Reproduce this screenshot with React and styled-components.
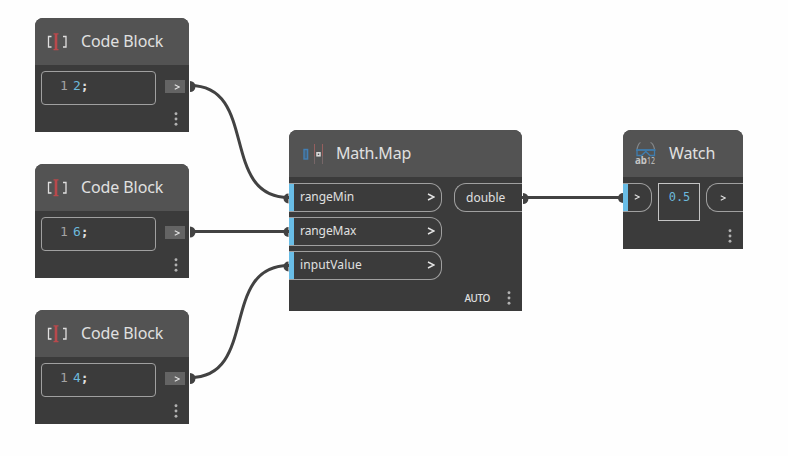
import React from "react";
import styled, { createGlobalStyle } from "styled-components";

const GlobalStyle = createGlobalStyle`
  * { box-sizing: border-box; }
  body { margin: 0; background: #fefefe; overflow: hidden; }
`;

const Canvas = styled.main`
  position: relative;
  width: 788px;
  height: 456px;
  background: #fefefe;
  font-family: "Noto Sans", sans-serif;
  color: #e0e0e0;
`;

const Wires = styled.svg`
  position: absolute;
  inset: 0;
`;

const Node = styled.section`
  position: absolute;
  left: ${(p) => p.$x}px;
  top: ${(p) => p.$y}px;
  width: ${(p) => p.$w}px;
  height: ${(p) => p.$h}px;
  display: flex;
  flex-direction: column;
  background: #3b3b3b;
  border-radius: 8px 8px 0 0;
`;

const Header = styled.header`
  display: flex;
  align-items: center;
  height: 47px;
  flex: none;
  padding-left: 11px;
  gap: 11px;
  background: #535353;
  border-radius: 8px 8px 0 0;
`;

const Title = styled.h2`
  margin: 0;
  padding-bottom: 2px;
  font-size: 16px;
  line-height: 22px;
  font-weight: 400;
  letter-spacing: ${(p) => p.$track || 0}px;
  white-space: nowrap;
`;

const CodeRow = styled.div`
  display: flex;
  justify-content: space-between;
  padding: 6px 4px 0 6px;
`;

const Editor = styled.div`
  display: flex;
  width: 115px;
  height: 34px;
  padding: 6px 0 0 18px;
  border: 1px solid #a0a0a0;
  border-radius: 4px;
  font: 13px/15px "DejaVu Sans Mono", monospace;
`;

const LineNumber = styled.span`
  width: 13px;
  color: #a3a3a3;
`;

const Value = styled.span`
  color: #6cb9dc;
`;

const Terminator = styled.span`
  font-weight: 700;
`;

const OutputTab = styled.div`
  display: flex;
  align-items: center;
  justify-content: flex-end;
  width: 20px;
  height: 13px;
  margin-top: 9px;
  padding-right: 5px;
  background: #646464;
`;

const Footer = styled.footer`
  display: flex;
  align-items: center;
  justify-content: flex-end;
  margin-top: auto;
  gap: ${(p) => p.$gap || 0}px;
  padding: 0 11px ${(p) => p.$bottom}px 0;
`;

const Lacing = styled.span`
  font-size: 10px;
  line-height: 14px;
  font-weight: 500;
  letter-spacing: -0.4px;
`;

const Ports = styled.div`
  display: flex;
  justify-content: space-between;
  align-items: flex-start;
  padding-top: 6px;
`;

const PortColumn = styled.div`
  display: flex;
  flex-direction: column;
  gap: 5px;
`;

const InPort = styled.div`
  display: flex;
  align-items: center;
  justify-content: space-between;
  width: ${(p) => p.$w}px;
  height: 29px;
  padding: 0 6px 2px 11px;
  border: 1px solid #a0a0a0;
  border-left: 0;
  border-radius: 0 12px 12px 0;
  box-shadow: inset 5px 0 #69bde6;
  font-size: 12px;
  letter-spacing: ${(p) => p.$track || 0}px;
`;

const OutPort = styled.div`
  display: flex;
  align-items: center;
  width: ${(p) => p.$w}px;
  height: 29px;
  padding-left: ${(p) => p.$pad}px;
  border: 1px solid #a0a0a0;
  border-right: 0;
  border-radius: 12px 0 0 12px;
  font-size: 12px;
`;

const Preview = styled.div`
  width: 42px;
  height: 38px;
  padding: 6px 0 0 1px;
  border: 1px solid #c4c4c4;
  color: #6cb9dc;
  text-align: center;
  font: 12px/15px "DejaVu Sans Mono", monospace;
`;

const Chevron = ({ small }) => (
  <svg width={small ? 6 : 8} height={small ? 6 : 8} viewBox="0 0 8 8">
    <path d="M1 1 7 4 1 7" fill="none" stroke="#e4e4e4" strokeWidth="1.4" />
  </svg>
);

const MenuDots = () => (
  <svg width="4" height="14" viewBox="0 0 4 14">
    {[1.7, 7, 12.3].map((y) => (
      <circle key={y} cx="2" cy={y} r="1.45" fill="#b2b2b2" />
    ))}
  </svg>
);

const CodeIcon = () => (
  <svg width="24" height="24" viewBox="0 0 24 24" fill="none">
    <path d="M5.5 6.5H2.5V17H5.5M17 6.5H20V17H17" stroke="#e0dfdf" strokeWidth="1.3" />
    <path d="M7.5 3.8H12.5M7.5 19.7H12.5" stroke="#b9494c" strokeWidth="1.2" />
    <path d="M10 4V20" stroke="#b9494c" strokeWidth="2.6" />
  </svg>
);

const MapIcon = () => (
  <svg width="25" height="24" viewBox="0 0 25 24" fill="none">
    <rect x="4" y="7.5" width="3.6" height="9.5" fill="#47647e" stroke="#427fb5" strokeWidth="1.4" />
    <path d="M14.5 2V14M22.5 2V14" stroke="#965f5e" />
    <path d="M14.5 14V22M22.5 14V22" stroke="#776768" />
    <rect x="17" y="10.8" width="3" height="3" stroke="#e0e0e0" strokeWidth="1.5" />
  </svg>
);

const IconText = styled.text`
  font: ${(p) => (p.$bold ? "700 10px" : "400 9px")} "Noto Sans", sans-serif;
  fill: #c4c4c4;
`;

const WatchIcon = () => (
  <svg width="24" height="26" viewBox="0 0 24 26" fill="none">
    <path d="M6.5 1.5Q4.5 2 3 8M16.5 1.5Q19 2 20.5 8" stroke="#85898c" strokeWidth="1.2" />
    <path d="M2 9H21.5" stroke="#3f7daf" strokeWidth="1.8" />
    <path d="M3 9V14.5H7.5L11.8 10.5 16 14.5H20.5V9" stroke="#3f7daf" strokeWidth="1.3" />
    <IconText $bold x="1" y="23" textLength="12" lengthAdjust="spacingAndGlyphs">ab</IconText>
    <IconText x="13" y="23" textLength="8" lengthAdjust="spacingAndGlyphs">12</IconText>
  </svg>
);

const blocks = [
  { y: 18, value: "2" },
  { y: 164, value: "6" },
  { y: 310, value: "4" },
];

const inputs = [
  { name: "rangeMin", track: -0.04 },
  { name: "rangeMax", track: -0.08 },
  { name: "inputValue", track: 0.12 },
];

function CodeBlock({ y, value }) {
  return (
    <Node $x={35} $y={y} $w={154} $h={114}>
      <Header>
        <CodeIcon />
        <Title $track={-0.1}>Code Block</Title>
      </Header>
      <CodeRow>
        <Editor>
          <LineNumber>1</LineNumber>
          <Value>{value}</Value>
          <Terminator>;</Terminator>
        </Editor>
        <OutputTab><Chevron small /></OutputTab>
      </CodeRow>
      <Footer $bottom={6}><MenuDots /></Footer>
    </Node>
  );
}

export default function App() {
  return (
    <>
      <GlobalStyle />
      <Canvas>
        <Wires width="788" height="456" fill="none">
          <g stroke="#424242" strokeWidth="3">
            <path d="M190 85.5C259 85.5 219 197.5 289 197.5" />
            <path d="M190 231.5H289" />
            <path d="M190 377.5C259 377.5 219 265.5 289 265.5" />
            <path d="M522 197.5H623" />
          </g>
          <g fill="#424242">
            {[86.5, 232, 378.5].map((y) => (
              <path key={y} d={`M190 ${y - 5.5}A5.5 5.5 0 0 1 190 ${y + 5.5}Z`} />
            ))}
            {[198.5, 232, 266.5].map((y) => (
              <path key={y} d={`M288.500 ${y - 5}A5 5 0 0 0 288.500 ${y + 5}Z`} />
            ))}
            <path d="M523 193A5.5 5.5 0 0 1 523 204Z" />
            <path d="M623 193A5 5 0 0 0 623 203Z" />
          </g>
        </Wires>
        {blocks.map((block) => <CodeBlock key={block.y} {...block} />)}
        <Node $x={289} $y={130} $w={233} $h={181}>
          <Header>
            <MapIcon />
            <Title $track={-0.22}>Math.Map</Title>
          </Header>
          <Ports>
            <PortColumn>
              {inputs.map(({ name, track }) => (
                <InPort key={name} $w={153} $track={track}>{name}<Chevron /></InPort>
              ))}
            </PortColumn>
            <OutPort $w={68} $pad={11}>double</OutPort>
          </Ports>
          <Footer $gap={17} $bottom={6}><Lacing>AUTO</Lacing><MenuDots /></Footer>
        </Node>
        <Node $x={623} $y={130} $w={120} $h={119}>
          <Header>
            <WatchIcon />
            <Title $track={-0.15}>Watch</Title>
          </Header>
          <Ports>
            <InPort $w={29}><Chevron small /></InPort>
            <Preview>0.5</Preview>
            <OutPort $w={37} $pad={13}><Chevron small /></OutPort>
          </Ports>
          <Footer $bottom={6}><MenuDots /></Footer>
        </Node>
      </Canvas>
    </>
  );
}
